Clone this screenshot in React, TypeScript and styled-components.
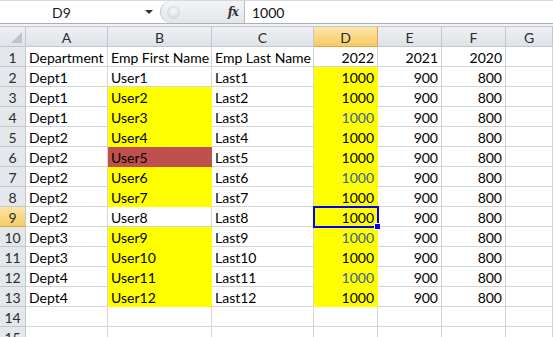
import React from "react";
import styled, { createGlobalStyle } from "styled-components";

const Global = createGlobalStyle`
  html, body { margin: 0; padding: 0; background: #ffffff; overflow: hidden; }
  body { font-family: "Lato", "Open Sans", sans-serif; }
`;

const Page = styled.div`
  width: 553px;
  height: 337px;
  overflow: hidden;
  background: #fff;
  display: flex;
  flex-direction: column;
  & > * { flex-shrink: 0; }
`;

const FormulaBar = styled.div`
  display: flex;
  height: 24px;
  border-top: 1px solid #d5d9de;
  border-bottom: 1px solid #a9b0b8;
  box-sizing: border-box;
  background: #fff;
`;

const NameBox = styled.div`
  width: 160px;
  display: flex;
  align-items: center;
  font-size: 14px;
  color: #1a1a1a;
`;

const NameText = styled.span`
  flex: 1;
  text-align: center;
  padding-right: 22px;
`;

const DropArrow = styled.span`
  width: 0;
  height: 0;
  border-left: 4px solid transparent;
  border-right: 4px solid transparent;
  border-top: 4px solid #333;
  margin-right: 7px;
`;

const Splitter = styled.div`
  width: 85px;
  background: linear-gradient(#f3f4f6, #e3e5e8);
  border-left: 1px solid #c4c8cd;
  border-right: 1px solid #b8bdc3;
  border-radius: 12px 0 0 12px;
  display: flex;
  align-items: center;
  justify-content: space-between;
  padding: 0 6px 0 6px;
  box-sizing: border-box;
`;

const Knob = styled.span`
  width: 11px;
  height: 11px;
  border-radius: 50%;
  background: radial-gradient(circle at 50% 35%, #fafafa, #cfd2d6);
  border: 1px solid #d8dbde;
`;

const Fx = styled.span`
  font-family: "DejaVu Serif", "Liberation Serif", serif;
  font-style: italic;
  font-weight: bold;
  font-size: 12px;
  color: #333;
  letter-spacing: -1px;
`;

const FormulaInput = styled.div`
  flex: 1;
  display: flex;
  align-items: center;
  padding-left: 7px;
  font-size: 14px;
  color: #111;
`;

const Strip = styled.div`
  height: 2px;
  background: #f2f3f5;
  border-bottom: 1px solid #c2c7cd;
`;

const Sheet = styled.div`
  position: relative;
  display: grid;
  grid-template-columns: 26px 82px 104px 102px 64px 64px 64px 47px;
  grid-auto-rows: 20px;
`;

const HeaderCell = styled.div<{ $active?: boolean; $row?: boolean }>`
  box-sizing: border-box;
  display: flex;
  align-items: center;
  justify-content: center;
  padding-top: 1px;
  font-size: 14px;
  color: #2b2b2b;
  background: ${(p) =>
    p.$active
      ? "linear-gradient(#fde6a8, #f6c965)"
      : p.$row
      ? "#e4e7eb"
      : "linear-gradient(#eef0f3, #dfe3e8)"};
  border-right: 1px solid ${(p) => (p.$active && !p.$row ? "#e0a944" : "#c3c8cf")};
  border-bottom: 1px solid ${(p) => (p.$active ? "#e0a944" : "#c3c8cf")};
`;

const Corner = styled.div`
  box-sizing: border-box;
  background: linear-gradient(#eef0f3, #dfe3e8);
  border-right: 1px solid #c3c8cf;
  border-bottom: 1px solid #c3c8cf;
  position: relative;
  &::after {
    content: "";
    position: absolute;
    right: 3px;
    bottom: 3px;
    width: 0;
    height: 0;
    border-left: 11px solid transparent;
    border-bottom: 11px solid #bfc4ca;
  }
`;

const Cell = styled.div<{ $bg?: string; $num?: boolean; $color?: string }>`
  box-sizing: border-box;
  display: flex;
  align-items: center;
  justify-content: ${(p) => (p.$num ? "flex-end" : "flex-start")};
  padding: 2px 3px 0 3px;
  font-size: 14px;
  color: ${(p) => p.$color || "#000"};
  white-space: nowrap;
  overflow: hidden;
  background: ${(p) => p.$bg || "#fff"};
  border-right: 1px solid ${(p) => (p.$bg ? p.$bg : "#d4d4d4")};
  border-bottom: 1px solid ${(p) => (p.$bg ? p.$bg : "#d4d4d4")};
`;

const Selection = styled.div`
  position: absolute;
  left: 313px;
  top: 179px;
  width: 66px;
  height: 22px;
  box-sizing: border-box;
  border: 2px solid #0000ff;
  pointer-events: none;
  &::after {
    content: "";
    position: absolute;
    right: -4px;
    bottom: -4px;
    width: 5px;
    height: 5px;
    background: #0000ff;
    border: 1px solid #fff;
  }
`;

const YELLOW = "#ffff00";
const RED = "#c0504d";
const BLUE = "#376092";

type Row = {
  dept: string;
  first: string;
  firstBg?: string;
  last: string;
  blue?: boolean;
};

const rows: Row[] = [
  { dept: "Dept1", first: "User1", last: "Last1" },
  { dept: "Dept1", first: "User2", firstBg: YELLOW, last: "Last2" },
  { dept: "Dept1", first: "User3", firstBg: YELLOW, last: "Last3", blue: true },
  { dept: "Dept2", first: "User4", firstBg: YELLOW, last: "Last4" },
  { dept: "Dept2", first: "User5", firstBg: RED, last: "Last5" },
  { dept: "Dept2", first: "User6", firstBg: YELLOW, last: "Last6", blue: true },
  { dept: "Dept2", first: "User7", firstBg: YELLOW, last: "Last7" },
  { dept: "Dept2", first: "User8", last: "Last8" },
  { dept: "Dept3", first: "User9", firstBg: YELLOW, last: "Last9", blue: true },
  { dept: "Dept3", first: "User10", firstBg: YELLOW, last: "Last10" },
  { dept: "Dept4", first: "User11", firstBg: YELLOW, last: "Last11", blue: true },
  { dept: "Dept4", first: "User12", firstBg: YELLOW, last: "Last12" },
];

const cols = ["A", "B", "C", "D", "E", "F", "G"];

export default function App() {
  return (
    <Page>
      <Global />
      <FormulaBar>
        <NameBox>
          <NameText>D9</NameText>
          <DropArrow />
        </NameBox>
        <Splitter>
          <Knob />
          <Fx>fx</Fx>
        </Splitter>
        <FormulaInput>1000</FormulaInput>
      </FormulaBar>
      <Strip />
      <Sheet>
        <Corner />
        {cols.map((c) => (
          <HeaderCell key={c} $active={c === "D"}>
            {c}
          </HeaderCell>
        ))}

        <HeaderCell $row>1</HeaderCell>
        <Cell>Department</Cell>
        <Cell>Emp First Name</Cell>
        <Cell>Emp Last Name</Cell>
        <Cell $num>2022</Cell>
        <Cell $num>2021</Cell>
        <Cell $num>2020</Cell>
        <Cell />

        {rows.map((r, i) => (
          <React.Fragment key={i}>
            <HeaderCell $row $active={i + 2 === 9}>
              {i + 2}
            </HeaderCell>
            <Cell>{r.dept}</Cell>
            <Cell $bg={r.firstBg}>{r.first}</Cell>
            <Cell>{r.last}</Cell>
            <Cell $num $bg={YELLOW} $color={r.blue ? BLUE : "#000"}>
              1000
            </Cell>
            <Cell $num>900</Cell>
            <Cell $num>800</Cell>
            <Cell />
          </React.Fragment>
        ))}

        {[14, 15].map((n) => (
          <React.Fragment key={n}>
            <HeaderCell $row>{n}</HeaderCell>
            {cols.map((c) => (
              <Cell key={c} />
            ))}
          </React.Fragment>
        ))}
        <Selection />
      </Sheet>
    </Page>
  );
}
